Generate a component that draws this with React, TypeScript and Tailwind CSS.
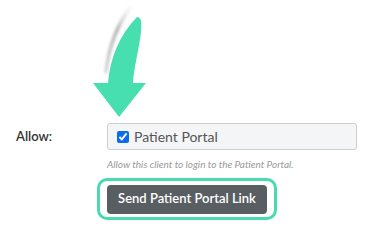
import React from "react";

const Arrow = () => (
  <svg width="80" height="120" viewBox="80 0 80 120" className="ml-[80px] block">
    <defs>
      <filter id="blur" x="-50%" y="-50%" width="200%" height="200%">
        <feGaussianBlur stdDeviation="1.4" />
      </filter>
      <linearGradient id="fade" x1="0" y1="0" x2="0" y2="1">
        <stop offset="0" stopColor="#c8c8c8" stopOpacity="0" />
        <stop offset="0.35" stopColor="#a8a8a8" stopOpacity="1" />
        <stop offset="1" stopColor="#b0b0b0" stopOpacity="0.6" />
      </linearGradient>
    </defs>
    <path
      d="M132,5 C 119,22 109,44 106,72"
      stroke="url(#fade)"
      strokeWidth="3"
      fill="none"
      filter="url(#blur)"
      strokeLinecap="round"
    />
    <path
      d="M137,17 C 141,17 142,22 141,32 C 139,50 134,66 133,83 L146,83 L119,117 L93,83 L108,83 C 110,58 120,34 137,17 Z"
      fill="#47dfb0"
    />
  </svg>
);

const App = () => {
  return (
    <div className="w-[376px] h-[227px] bg-white font-['Lato',sans-serif] overflow-hidden">
      <Arrow />
      <div className="flex items-start mt-[3px]">
        <div className="w-[107px] pl-[16px] pt-[4px] text-[13px] font-semibold text-[#333]">
          Allow:
        </div>
        <div className="w-[250px] h-[27px] flex items-center gap-[5px] px-[9px] bg-[#f4f5f6] border border-[#cfcfcf] rounded-[3px]">
          <input type="checkbox" defaultChecked className="w-[12px] h-[12px] accent-[#0b6cf0] m-0" />
          <span className="text-[14px] text-[#555]">Patient Portal</span>
        </div>
      </div>
      <div className="ml-[107px] mt-[7px] text-[10px] italic text-[#999]">
        Allow this client to login to the Patient Portal.
      </div>
      <div className="ml-[97px] mt-[6px] w-[180px] h-[42px] border-[3px] border-[#47dbaf] rounded-[10px] flex items-center justify-center">
        <button className="w-[160px] h-[29px] bg-[#595e62] rounded-[4px] text-white text-[13px] font-semibold">
          Send Patient Portal Link
        </button>
      </div>
    </div>
  );
};

export default App;
